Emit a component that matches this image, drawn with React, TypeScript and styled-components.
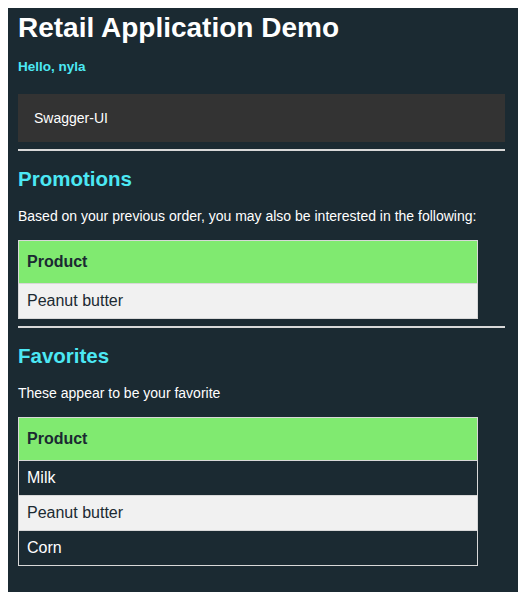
import styled, { createGlobalStyle } from 'styled-components';

const GlobalStyle = createGlobalStyle`
  body {
    margin: 8px;
    background: #ffffff;
    font-family: "Liberation Sans", Arial, sans-serif;
  }
`;

const Panel = styled.div`
  background-color: #1b2a32;
  padding: 0 13px 26px 10px;
  color: #ffffff;
`;

const Title = styled.h1`
  margin: 0;
  padding-top: 4px;
  font-size: 28px;
  font-weight: bold;
  line-height: 32px;
`;

const Greeting = styled.p`
  margin: 15px 0 0;
  font-size: 13.5px;
  font-weight: bold;
  color: #4ce8f4;
`;

const NavBar = styled.div`
  margin-top: 20px;
  height: 48px;
  display: flex;
  align-items: center;
  padding: 0 16px;
  background-color: #333333;
  font-size: 14px;
`;

const Rule = styled.hr`
  margin: 7px 0 0;
  border: none;
  border-top: 2px solid #d8d8d8;
`;

const SectionTitle = styled.h2`
  margin: 16px 0 0;
  font-size: 20.5px;
  line-height: 24px;
  font-weight: bold;
  color: #4ce8f4;
`;

const Intro = styled.p`
  margin: 16px 0 0;
  font-size: 14px;
  line-height: 18px;
`;

const Table = styled.table`
  margin-top: 15px;
  width: 460px;
  border-collapse: collapse;
  border: 1px solid #d8d8d8;
  font-size: 16px;
`;

const HeadCell = styled.th`
  height: 42px;
  padding: 0 8px;
  text-align: left;
  background-color: #80ea70;
  color: #1b2a32;
  font-weight: bold;
  border: 1px solid #d8d8d8;
`;

const Cell = styled.td<{ $alt: boolean }>`
  height: 34px;
  padding: 0 8px;
  border: 1px solid #d8d8d8;
  background-color: ${({ $alt }) => ($alt ? '#f1f1f1' : '#1b2a32')};
  color: ${({ $alt }) => ($alt ? '#1b2a32' : '#ffffff')};
`;

const ProductTable = ({ items, altFirst }: { items: string[]; altFirst: boolean }) => (
  <Table>
    <thead>
      <tr>
        <HeadCell>Product</HeadCell>
      </tr>
    </thead>
    <tbody>
      {items.map((item, i) => (
        <tr key={item}>
          <Cell $alt={altFirst ? i % 2 === 0 : i % 2 === 1}>{item}</Cell>
        </tr>
      ))}
    </tbody>
  </Table>
);

const App = () => (
  <>
    <GlobalStyle />
    <Panel>
      <Title>Retail Application Demo</Title>
      <Greeting>Hello, nyla</Greeting>
      <NavBar>Swagger-UI</NavBar>
      <Rule />
      <SectionTitle>Promotions</SectionTitle>
      <Intro>Based on your previous order, you may also be interested in the following:</Intro>
      <ProductTable items={['Peanut butter']} altFirst />
      <Rule />
      <SectionTitle>Favorites</SectionTitle>
      <Intro>These appear to be your favorite</Intro>
      <ProductTable items={['Milk', 'Peanut butter', 'Corn']} altFirst={false} />
    </Panel>
  </>
);

export default App;
